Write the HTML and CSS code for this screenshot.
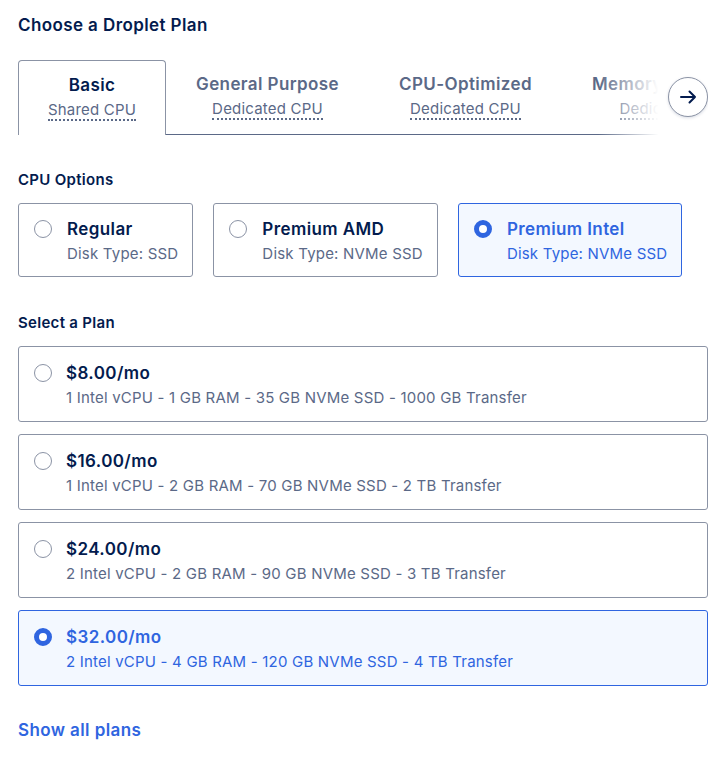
FILE: index.html
```html
<!DOCTYPE html>
<html lang="en">
<head>
    <meta charset="UTF-8">
    <title>Choose a Droplet Plan</title>
    <link rel="stylesheet" href="styles.css">
</head>
<body>
    <div class="page">
        <h2 class="section-title">Choose a Droplet Plan</h2>

        <div class="tabs-wrap">
            <div class="tabs">
                <div class="tab active">
                    <div class="tab-name">Basic</div>
                    <div class="tab-sub"><span>Shared CPU</span></div>
                </div>
                <div class="tab">
                    <div class="tab-name">General Purpose</div>
                    <div class="tab-sub"><span>Dedicated CPU</span></div>
                </div>
                <div class="tab">
                    <div class="tab-name">CPU-Optimized</div>
                    <div class="tab-sub"><span>Dedicated CPU</span></div>
                </div>
                <div class="tab">
                    <div class="tab-name">Memory-Optimized</div>
                    <div class="tab-sub"><span>Dedicated CPU</span></div>
                </div>
                <div class="tab-filler"></div>
            </div>
            <div class="tabs-fade"></div>
            <button class="tabs-next" aria-label="Next">
                <svg width="20" height="20" viewBox="0 0 20 20" fill="none" stroke="#031b4e" stroke-width="2" stroke-linecap="round" stroke-linejoin="round">
                    <path d="M3 10h14M11.5 4.5L17 10l-5.5 5.5"/>
                </svg>
            </button>
        </div>

        <h3 class="label">CPU Options</h3>
        <div class="cpu-options">
            <div class="option">
                <span class="radio"></span>
                <div>
                    <div class="option-name">Regular</div>
                    <div class="option-sub">Disk Type: SSD</div>
                </div>
            </div>
            <div class="option">
                <span class="radio"></span>
                <div>
                    <div class="option-name">Premium AMD</div>
                    <div class="option-sub">Disk Type: NVMe SSD</div>
                </div>
            </div>
            <div class="option selected">
                <span class="radio"></span>
                <div>
                    <div class="option-name">Premium Intel</div>
                    <div class="option-sub">Disk Type: NVMe SSD</div>
                </div>
            </div>
        </div>

        <h3 class="label plans-label">Select a Plan</h3>
        <div class="plans">
            <div class="plan">
                <span class="radio"></span>
                <div>
                    <div class="plan-price">$8.00/mo</div>
                    <div class="plan-spec">1 Intel vCPU - 1 GB RAM - 35 GB NVMe SSD - 1000 GB Transfer</div>
                </div>
            </div>
            <div class="plan">
                <span class="radio"></span>
                <div>
                    <div class="plan-price">$16.00/mo</div>
                    <div class="plan-spec">1 Intel vCPU - 2 GB RAM - 70 GB NVMe SSD - 2 TB Transfer</div>
                </div>
            </div>
            <div class="plan">
                <span class="radio"></span>
                <div>
                    <div class="plan-price">$24.00/mo</div>
                    <div class="plan-spec">2 Intel vCPU - 2 GB RAM - 90 GB NVMe SSD - 3 TB Transfer</div>
                </div>
            </div>
            <div class="plan selected">
                <span class="radio"></span>
                <div>
                    <div class="plan-price">$32.00/mo</div>
                    <div class="plan-spec">2 Intel vCPU - 4 GB RAM - 120 GB NVMe SSD - 4 TB Transfer</div>
                </div>
            </div>
        </div>

        <a class="show-all" href="#">Show all plans</a>
    </div>
</body>
</html>
```

FILE: styles.css
```css
body {
    margin: 0;
    font-family: Inter, "Noto Sans", sans-serif;
    color: #031b4e;
    background: #fff;
}

.page {
    width: 690px;
    padding: 14px 0 0 18px;
}

.section-title {
    margin: 0;
    font-size: 17px;
    line-height: 22px;
    font-weight: 600;
    letter-spacing: 0.4px;
}

/* tabs */

.tabs-wrap {
    position: relative;
    margin-top: 24px;
    overflow: hidden;
}

.tabs {
    display: flex;
    height: 75px;
}

.tab {
    flex: none;
    box-sizing: border-box;
    height: 75px;
    padding: 13px 30px 0;
    text-align: center;
    border-bottom: 1px solid #5b6987;
    white-space: nowrap;
}

.tab.active {
    width: 148px;
    padding: 13px 0 0;
    border: 1px solid #8b93a5;
    border-bottom: none;
    border-radius: 4px 4px 0 0;
}

.tab-filler {
    flex: 1;
    border-bottom: 1px solid #5b6987;
}

.tab-name {
    font-size: 17px;
    line-height: 22px;
    font-weight: 600;
    letter-spacing: 0.4px;
    color: #5b6987;
}

.tab.active .tab-name {
    color: #031b4e;
}

.tab-sub {
    margin-top: 4px;
    font-size: 15px;
    line-height: 20px;
    letter-spacing: 0.2px;
    color: #5b6987;
}

.tab-sub span {
    border-bottom: 2px dotted #5b6987;
}

.tabs-fade {
    position: absolute;
    top: 0;
    right: 0;
    width: 110px;
    height: 76px;
    background: linear-gradient(to right, rgba(255, 255, 255, 0), #fff 55%);
}

.tabs-next {
    position: absolute;
    top: 17px;
    right: 0;
    width: 40px;
    height: 40px;
    padding: 0;
    border: 1px solid #8b93a5;
    border-radius: 50%;
    background: #fff;
    box-shadow: 0 1px 3px rgba(3, 27, 78, 0.15);
    display: flex;
    align-items: center;
    justify-content: center;
}

/* options */

.label {
    margin: 35px 0 0;
    font-size: 15px;
    line-height: 20px;
    font-weight: 600;
    letter-spacing: 0.3px;
}

.plans-label {
    margin-top: 36px;
}

.cpu-options {
    display: flex;
    gap: 20px;
    margin-top: 13px;
}

.option, .plan {
    box-sizing: border-box;
    display: flex;
    align-items: flex-start;
    gap: 15px;
    border: 1px solid #8b93a5;
    border-radius: 3px;
    background: #fff;
}

.option {
    height: 74px;
    padding: 14px 14px 0 15px;
}

.radio {
    flex: none;
    box-sizing: border-box;
    width: 18px;
    height: 18px;
    margin-top: 2px;
    border: 1.5px solid #8b93a5;
    border-radius: 50%;
    background: #fff;
}

.selected {
    background: #f3f8ff;
    border-color: #2f65e0;
}

.selected .radio {
    border: 5px solid #2f65e0;
}

.option-name, .plan-price {
    font-size: 17px;
    line-height: 22px;
    font-weight: 600;
    letter-spacing: 0.4px;
}

.option-sub, .plan-spec {
    margin-top: 4px;
    font-size: 15px;
    line-height: 20px;
    letter-spacing: 0.2px;
    color: #5b6987;
}

.selected .option-name,
.selected .option-sub,
.selected .plan-price,
.selected .plan-spec {
    color: #2f65e0;
}

.plans {
    display: flex;
    flex-direction: column;
    gap: 12px;
    margin-top: 13px;
}

.plan {
    height: 76px;
    padding: 15px 15px 0 15px;
    gap: 14px;
}

.show-all {
    display: inline-block;
    margin-top: 33px;
    font-size: 17px;
    line-height: 22px;
    font-weight: 600;
    letter-spacing: 0.4px;
    color: #2f65e0;
    text-decoration: none;
}
```
